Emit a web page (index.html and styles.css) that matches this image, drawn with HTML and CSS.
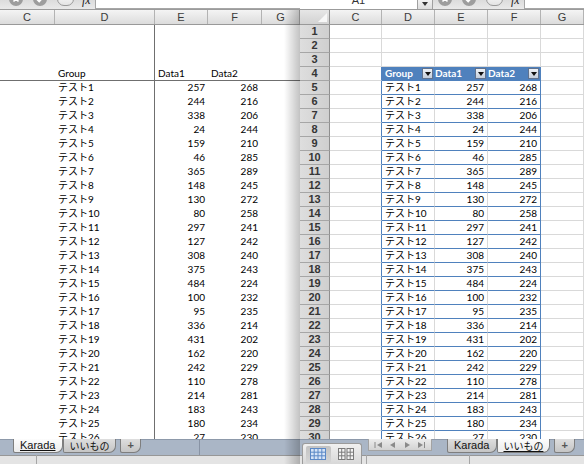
FILE: index.html
```html
<!DOCTYPE html>
<html>
<head>
    <meta charset="utf-8">
    <title>Karada</title>
    <link rel="stylesheet" href="styles.css">
</head>
<body>
<div class="desk">

    <!-- left window: frozen panes, no headings -->
    <div class="window left-win">
        <div class="toolbar">
            <span class="tb-btn first"><svg width="14" height="14" viewBox="0 0 14 14"><circle cx="7" cy="7" r="7" fill="#9d9d9d"/><path d="M4.5 4.5l5 5M9.5 4.5l-5 5" stroke="#fff" stroke-width="1.6"/></svg></span>
            <span class="tb-btn"><svg width="14" height="14" viewBox="0 0 14 14"><circle cx="7" cy="7" r="7" fill="#9d9d9d"/><path d="M3.8 7.2l2.4 2.4 4.2-4.6" stroke="#fff" stroke-width="1.6" fill="none"/></svg></span>
            <span class="tb-pill"><i></i></span>
            <span class="tb-fx">fx</span>
            <span class="formula"></span>
        </div>
        <div class="col-head left-cols">
            <div>C</div><div>D</div><div>E</div><div>F</div><div>G</div>
        </div>
        <div class="sheet">
            <div class="r"><span></span><span></span><span></span><span></span><span></span></div>
            <div class="r"><span></span><span></span><span></span><span></span><span></span></div>
            <div class="r"><span></span><span></span><span></span><span></span><span></span></div>
            <div class="r hd"><span></span><span>Group</span><span>Data1</span><span>Data2</span><span></span></div>
            <div class="r"><span></span><span>テスト1</span><span>257</span><span>268</span><span></span></div>
            <div class="r"><span></span><span>テスト2</span><span>244</span><span>216</span><span></span></div>
            <div class="r"><span></span><span>テスト3</span><span>338</span><span>206</span><span></span></div>
            <div class="r"><span></span><span>テスト4</span><span>24</span><span>244</span><span></span></div>
            <div class="r"><span></span><span>テスト5</span><span>159</span><span>210</span><span></span></div>
            <div class="r"><span></span><span>テスト6</span><span>46</span><span>285</span><span></span></div>
            <div class="r"><span></span><span>テスト7</span><span>365</span><span>289</span><span></span></div>
            <div class="r"><span></span><span>テスト8</span><span>148</span><span>245</span><span></span></div>
            <div class="r"><span></span><span>テスト9</span><span>130</span><span>272</span><span></span></div>
            <div class="r"><span></span><span>テスト10</span><span>80</span><span>258</span><span></span></div>
            <div class="r"><span></span><span>テスト11</span><span>297</span><span>241</span><span></span></div>
            <div class="r"><span></span><span>テスト12</span><span>127</span><span>242</span><span></span></div>
            <div class="r"><span></span><span>テスト13</span><span>308</span><span>240</span><span></span></div>
            <div class="r"><span></span><span>テスト14</span><span>375</span><span>243</span><span></span></div>
            <div class="r"><span></span><span>テスト15</span><span>484</span><span>224</span><span></span></div>
            <div class="r"><span></span><span>テスト16</span><span>100</span><span>232</span><span></span></div>
            <div class="r"><span></span><span>テスト17</span><span>95</span><span>235</span><span></span></div>
            <div class="r"><span></span><span>テスト18</span><span>336</span><span>214</span><span></span></div>
            <div class="r"><span></span><span>テスト19</span><span>431</span><span>202</span><span></span></div>
            <div class="r"><span></span><span>テスト20</span><span>162</span><span>220</span><span></span></div>
            <div class="r"><span></span><span>テスト21</span><span>242</span><span>229</span><span></span></div>
            <div class="r"><span></span><span>テスト22</span><span>110</span><span>278</span><span></span></div>
            <div class="r"><span></span><span>テスト23</span><span>214</span><span>281</span><span></span></div>
            <div class="r"><span></span><span>テスト24</span><span>183</span><span>243</span><span></span></div>
            <div class="r"><span></span><span>テスト25</span><span>180</span><span>234</span><span></span></div>
            <div class="r"><span></span><span>テスト26</span><span>27</span><span>230</span><span></span></div>
        </div>
        <div class="bottom">
            <div class="tabs">
                <span class="tab on">Karada</span>
                <span class="tab jp">いいもの</span>
                <span class="tab plus">+</span>
            </div>
            <div class="stat"></div>
        </div>
    </div>

    <!-- right window: sheet with table style -->
    <div class="window right-win">
        <div class="toolbar">
            <span class="namebox"><span>A1</span></span>
            <span class="nb-drop"></span>
            <span class="tb-btn first"><svg width="14" height="14" viewBox="0 0 14 14"><circle cx="7" cy="7" r="7" fill="#9d9d9d"/><path d="M4.5 4.5l5 5M9.5 4.5l-5 5" stroke="#fff" stroke-width="1.6"/></svg></span>
            <span class="tb-btn"><svg width="14" height="14" viewBox="0 0 14 14"><circle cx="7" cy="7" r="7" fill="#9d9d9d"/><path d="M3.8 7.2l2.4 2.4 4.2-4.6" stroke="#fff" stroke-width="1.6" fill="none"/></svg></span>
            <span class="tb-pill"><i></i></span>
            <span class="tb-fx">fx</span>
            <span class="formula"></span>
        </div>
        <div class="col-head right-cols">
            <div class="corner"></div><div>C</div><div>D</div><div>E</div><div>F</div><div>G</div>
        </div>
        <div class="sheet">
            <div class="r"><b>1</b><span></span><span></span><span></span><span></span><span></span></div>
            <div class="r"><b>2</b><span></span><span></span><span></span><span></span><span></span></div>
            <div class="r"><b>3</b><span></span><span></span><span></span><span></span><span></span></div>
            <div class="r tb th"><b>4</b><span></span><span>Group<i class="dd"></i></span><span>Data1<i class="dd"></i></span><span>Data2<i class="dd"></i></span><span></span></div>
            <div class="r tb"><b>5</b><span></span><span>テスト1</span><span>257</span><span>268</span><span></span></div>
            <div class="r tb"><b>6</b><span></span><span>テスト2</span><span>244</span><span>216</span><span></span></div>
            <div class="r tb"><b>7</b><span></span><span>テスト3</span><span>338</span><span>206</span><span></span></div>
            <div class="r tb"><b>8</b><span></span><span>テスト4</span><span>24</span><span>244</span><span></span></div>
            <div class="r tb"><b>9</b><span></span><span>テスト5</span><span>159</span><span>210</span><span></span></div>
            <div class="r tb"><b>10</b><span></span><span>テスト6</span><span>46</span><span>285</span><span></span></div>
            <div class="r tb"><b>11</b><span></span><span>テスト7</span><span>365</span><span>289</span><span></span></div>
            <div class="r tb"><b>12</b><span></span><span>テスト8</span><span>148</span><span>245</span><span></span></div>
            <div class="r tb"><b>13</b><span></span><span>テスト9</span><span>130</span><span>272</span><span></span></div>
            <div class="r tb"><b>14</b><span></span><span>テスト10</span><span>80</span><span>258</span><span></span></div>
            <div class="r tb"><b>15</b><span></span><span>テスト11</span><span>297</span><span>241</span><span></span></div>
            <div class="r tb"><b>16</b><span></span><span>テスト12</span><span>127</span><span>242</span><span></span></div>
            <div class="r tb"><b>17</b><span></span><span>テスト13</span><span>308</span><span>240</span><span></span></div>
            <div class="r tb"><b>18</b><span></span><span>テスト14</span><span>375</span><span>243</span><span></span></div>
            <div class="r tb"><b>19</b><span></span><span>テスト15</span><span>484</span><span>224</span><span></span></div>
            <div class="r tb"><b>20</b><span></span><span>テスト16</span><span>100</span><span>232</span><span></span></div>
            <div class="r tb"><b>21</b><span></span><span>テスト17</span><span>95</span><span>235</span><span></span></div>
            <div class="r tb"><b>22</b><span></span><span>テスト18</span><span>336</span><span>214</span><span></span></div>
            <div class="r tb"><b>23</b><span></span><span>テスト19</span><span>431</span><span>202</span><span></span></div>
            <div class="r tb"><b>24</b><span></span><span>テスト20</span><span>162</span><span>220</span><span></span></div>
            <div class="r tb"><b>25</b><span></span><span>テスト21</span><span>242</span><span>229</span><span></span></div>
            <div class="r tb"><b>26</b><span></span><span>テスト22</span><span>110</span><span>278</span><span></span></div>
            <div class="r tb"><b>27</b><span></span><span>テスト23</span><span>214</span><span>281</span><span></span></div>
            <div class="r tb"><b>28</b><span></span><span>テスト24</span><span>183</span><span>243</span><span></span></div>
            <div class="r tb"><b>29</b><span></span><span>テスト25</span><span>180</span><span>234</span><span></span></div>
            <div class="r tb"><b>30</b><span></span><span>テスト26</span><span>27</span><span>230</span><span></span></div>
        </div>
        <div class="bottom">
            <div class="viewbox">
                <span class="vb on"><svg width="16" height="12" viewBox="0 0 16 12"><rect x="0.5" y="0.5" width="15" height="11" fill="#d6e4f7" stroke="#5b88c6"/><path d="M0.5 4.2h15M0.5 7.8h15M4.2 0.5v11M8 0.5v11M11.8 0.5v11" stroke="#5b88c6"/></svg></span>
                <span class="vb"><svg width="16" height="12" viewBox="0 0 16 12"><rect x="0.5" y="0.5" width="6.5" height="11" fill="#f4f4f4" stroke="#7a7a7a"/><rect x="9" y="0.5" width="6.5" height="11" fill="#f4f4f4" stroke="#7a7a7a"/><path d="M0.5 4.2h6.5M0.5 7.8h6.5M3.7 0.5v11M9 4.2h6.5M9 7.8h6.5M12.2 0.5v11" stroke="#7a7a7a"/></svg></span>
            </div>
            <div class="tabs">
                <span class="nav"><svg width="62" height="10" viewBox="0 0 62 10"><path d="M6 2v6" stroke="#8a8a8a"/><path d="M13 2l-5 3 5 3z" fill="#8a8a8a"/><path d="M26 2l-5 3 5 3z" fill="#8a8a8a"/><path d="M36 2l5 3-5 3z" fill="#8a8a8a"/><path d="M49 2l5 3-5 3z" fill="#8a8a8a"/><path d="M55.5 2v6" stroke="#8a8a8a"/></svg></span>
                <span class="tab">Karada</span>
                <span class="tab jp on">いいもの</span>
                <span class="tab plus">+</span>
            </div>
            <div class="stat"></div>
            <div class="stat"></div>
        </div>
    </div>

</div>
</body>
</html>
```

FILE: styles.css
```css
body {
    margin: 0;
    width: 584px;
    height: 464px;
    overflow: hidden;
    font-family: Lato, "Noto Sans CJK JP", sans-serif;
    font-size: 10px;
    color: #000;
    background-color: #fff;
}

.desk {
    display: flex;
    height: 464px;
}

.window {
    display: flex;
    flex-direction: column;
    position: relative;
    overflow: hidden;
}

.left-win {
    width: 300px;
}

.right-win {
    width: 284px;
}

/* formula bar, cut off at the top */
.toolbar {
    height: 9px;
    flex: none;
    display: flex;
    align-items: flex-start;
    overflow: hidden;
    border-bottom: 1px solid #9b9b9b;
    background: linear-gradient(#dcdcdc, #e9e9e9);
}

.tb-btn {
    margin-top: -8px;
    margin-left: 10px;
    height: 14px;
}

.left-win .tb-btn.first {
    margin-left: 9px;
}

.tb-pill {
    margin-top: -8px;
    margin-left: 10px;
    width: 17px;
    height: 14px;
    box-sizing: border-box;
    border: 1px solid #9a9a9a;
    border-radius: 7px;
    background: linear-gradient(#fbfbfb, #e4e4e4);
    display: flex;
    align-items: center;
    justify-content: center;
}

.tb-pill i {
    width: 7px;
    height: 1px;
    margin-top: 1px;
    background-color: #b8b8b8;
}

.tb-fx {
    margin-left: 8px;
    margin-top: -6px;
    font: italic 12px/12px "Liberation Serif", serif;
    color: #222;
}

.formula {
    flex: 1;
    height: 8px;
    margin-left: 4px;
    border-left: 1px solid #a6a6a6;
    border-bottom: 1px solid #a6a6a6;
    background-color: #fff;
}

.namebox {
    width: 117px;
    height: 9px;
    border-right: 1px solid #a0a0a0;
    background-color: #fff;
    text-align: center;
    font: 11px/11px "Liberation Sans", sans-serif;
    color: #333;
}

.namebox span {
    display: block;
    margin-top: -5px;
}

.nb-drop {
    width: 15px;
    height: 9px;
    box-sizing: border-box;
    border-right: 1px solid #a0a0a0;
    background: linear-gradient(#f2f2f2, #dcdcdc);
    display: flex;
    justify-content: center;
    padding-top: 2px;
}

.nb-drop::after {
    content: "";
    border-left: 3px solid transparent;
    border-right: 3px solid transparent;
    border-top: 4px solid #333;
    height: 0;
}

.right-win .tb-btn.first {
    margin-left: 5px;
}

/* column letters */
.col-head {
    display: grid;
    height: 15px;
    flex: none;
    box-sizing: border-box;
    border-bottom: 1px solid #999;
    background: linear-gradient(#f4f4f4, #dcdcdc);
    font: 11px/14px "Liberation Sans", sans-serif;
    color: #3b3b3b;
}

.col-head > div {
    border-right: 1px solid #b3b3b3;
    text-align: center;
}

.left-cols,
.left-win .r {
    grid-template-columns: 55px 100px 53px 54px 1fr;
}

.right-cols,
.right-win .r {
    grid-template-columns: 30px 52px 53px 53px 53px 1fr;
}

.corner {
    position: relative;
    background: linear-gradient(#e6e6e6, #d2d2d2);
    border-right-color: #8f8f8f !important;
}

.corner::after {
    content: "";
    position: absolute;
    right: 2px;
    bottom: 2px;
    border-left: 9px solid transparent;
    border-bottom: 9px solid #f7f7f7;
}

.sheet {
    flex: 1;
    overflow: hidden;
}

.r {
    display: grid;
    height: 14px;
}

.r > * {
    box-sizing: border-box;
    line-height: 13px;
    white-space: nowrap;
    overflow: hidden;
}

/* left window: frozen at E5 */
.left-win .r > :nth-child(2) {
    padding-left: 3px;
    border-right: 1px solid #6f6f6f;
}

.left-win .r > :nth-child(3) {
    text-align: right;
    padding-right: 3px;
}

.left-win .r > :nth-child(4) {
    text-align: right;
    padding-right: 4px;
}

.left-win .r.hd > * {
    border-bottom: 1px solid #6f6f6f;
    text-align: left;
    padding-left: 3px;
}

.left-win::after {
    content: "";
    position: absolute;
    top: 10px;
    right: 0;
    bottom: 0;
    width: 16px;
    background: linear-gradient(90deg, rgba(0, 0, 0, 0), rgba(0, 0, 0, 0.24));
}

/* right window grid */
.right-win .r > * {
    border-right: 1px solid #d9d9d9;
    border-bottom: 1px solid #d9d9d9;
}

.right-win .r > b {
    background: linear-gradient(90deg, #dedede, #cfcfcf);
    border-right-color: #8f8f8f;
    border-bottom-color: #a6a6a6;
    text-align: center;
    font: bold 11px/13px "Liberation Sans", sans-serif;
    color: #353535;
}

.tb > :nth-child(2) {
    border-right-color: #4f81bd;
}

.tb > :nth-child(3) {
    padding-left: 3px;
}

.tb > :nth-child(4),
.tb > :nth-child(5) {
    text-align: right;
    padding-right: 3px;
}

.tb > :nth-child(3),
.tb > :nth-child(4),
.tb > :nth-child(5) {
    border-bottom-color: #4f81bd;
}

.tb > :nth-child(5) {
    border-right-color: #4f81bd;
}

.tb.th > :nth-child(3),
.tb.th > :nth-child(4),
.tb.th > :nth-child(5) {
    display: flex;
    justify-content: space-between;
    align-items: center;
    padding-right: 1px;
    background-color: #4f81bd;
    border-right-color: #4f81bd;
    color: #fff;
    font-weight: bold;
}

.dd {
    width: 11px;
    height: 11px;
    box-sizing: border-box;
    border: 1px solid #60728e;
    background: linear-gradient(#eef2f7, #c4cedb);
    display: flex;
    align-items: center;
    justify-content: center;
}

.dd::after {
    content: "";
    border-left: 3px solid transparent;
    border-right: 3px solid transparent;
    border-top: 4px solid #111;
}

/* sheet tabs and status strip */
.bottom {
    height: 25px;
    flex: none;
    display: grid;
    grid-template-rows: 16px 9px;
    background: linear-gradient(#8d99aa 0, #8d99aa 1px, #aab6c6 1px, #aab6c6 16px, #979797 16px, #979797 17px, #e4e4e4 17px);
}

.left-win .bottom {
    grid-template-columns: 37px 163px 1fr;
}

.left-win .tabs {
    grid-column: 1 / 3;
    padding-left: 13px;
    border-right: 1px solid #8893a4;
}

.left-win .stat {
    grid-row: 2;
    grid-column: 1;
    border-right: 1px solid #a6a6a6;
}

.right-win .bottom {
    grid-template-columns: 2px 60px 5px 103px 1fr;
}

.right-win .tabs {
    grid-row: 1;
    grid-column: 3 / 6;
    padding-left: 6px;
}

.right-win .stat {
    grid-row: 2;
    border-right: 1px solid #a6a6a6;
}

.right-win .stat:nth-of-type(3) {
    grid-column: 3;
}

.right-win .stat:nth-of-type(4) {
    grid-column: 4;
}

.tabs {
    display: flex;
    align-items: flex-start;
}

.tab {
    height: 14px;
    box-sizing: border-box;
    padding: 0 7px 0 6px;
    border: 1px solid #7e7e7e;
    border-top: none;
    border-radius: 0 0 7px 2px;
    background: linear-gradient(#dedede, #c5c5c5);
    font: 11px/13px "Liberation Sans", sans-serif;
    color: #111;
    overflow: hidden;
}

.tab.jp {
    padding: 0 6px 0 5px;
    font: 10px/13px "Noto Sans CJK JP", sans-serif;
}

.tab.on {
    background: linear-gradient(#fcfcfc, #ececec);
    text-decoration: underline;
}

.tab.plus {
    margin-left: 4px;
    padding: 0 6px;
    font-weight: bold;
    color: #555;
}

.nav {
    width: 64px;
    height: 12px;
    box-sizing: border-box;
    margin-right: 15px;
    border: 1px solid #a3a3a3;
    border-top: none;
    background: linear-gradient(#ececec, #d3d3d3);
    display: flex;
    align-items: center;
    justify-content: center;
}

.viewbox {
    grid-row: 1 / 3;
    grid-column: 2;
    margin-top: 4px;
    box-sizing: border-box;
    border: 1px solid #9b9b9b;
    border-bottom: none;
    border-radius: 3px 3px 0 0;
    background: linear-gradient(#f0f0f0, #d8d8d8);
    display: flex;
    align-items: center;
    gap: 3px;
    padding: 0 3px;
}

.vb {
    width: 25px;
    height: 17px;
    display: flex;
    align-items: center;
    justify-content: center;
    border-radius: 2px;
}

.vb.on {
    background: linear-gradient(#c2c2c2, #d6d6d6);
}
```
